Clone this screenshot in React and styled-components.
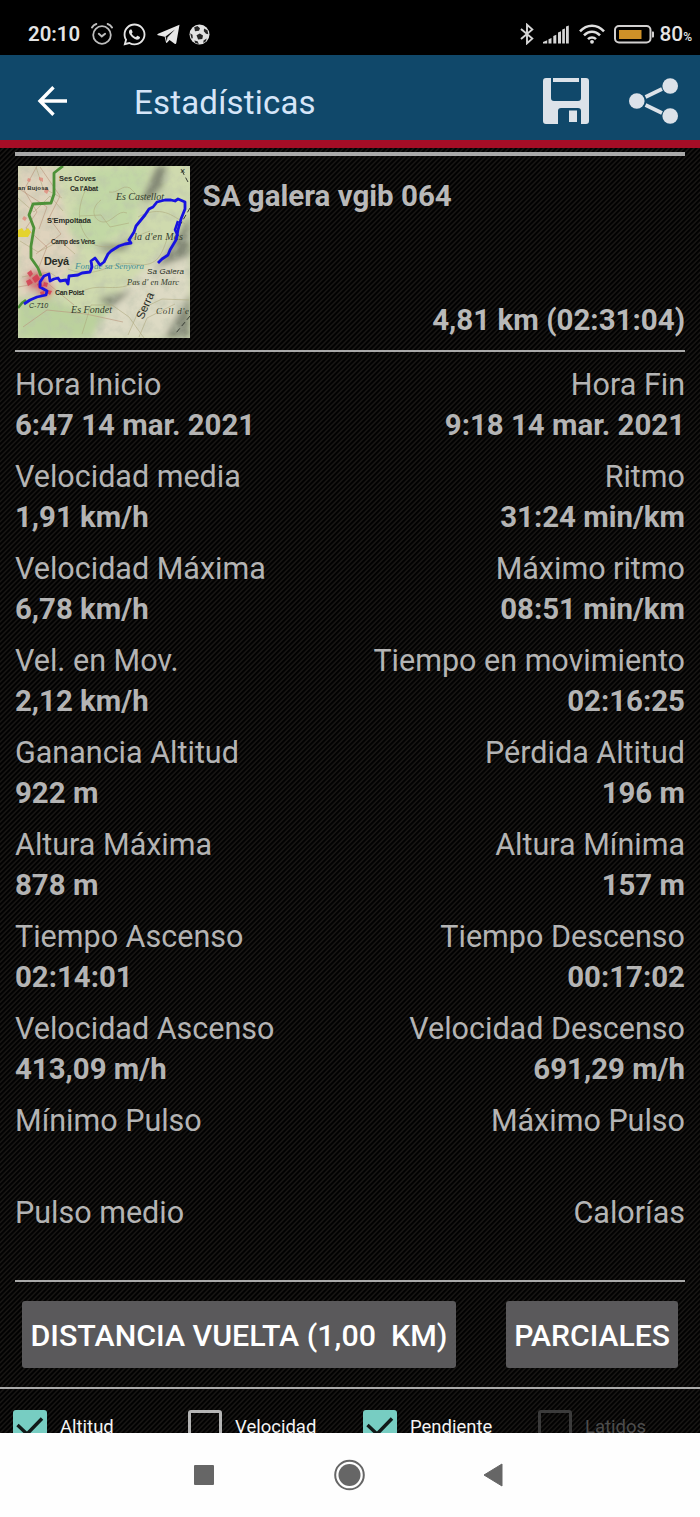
import React from 'react';
import styled, { createGlobalStyle, css } from 'styled-components';
import { FaWhatsapp } from 'react-icons/fa';

const Global = createGlobalStyle`
  * { box-sizing: border-box; }
  body { margin: 0; background: #000; font-family: Roboto, "Liberation Sans", sans-serif; }
  svg { display: block; flex: none; }
`;

const Screen = styled.div`
  width: 700px;
  height: 1517px;
  display: flex;
  flex-direction: column;
  overflow: hidden;
  background: #000;
`;

const StatusBar = styled.header`
  height: 55px;
  padding: 14px 8px 0 28px;
  display: flex;
  justify-content: space-between;
  color: #e4e4e4;
`;

const StatusGroup = styled.div`
  height: 40px;
  display: flex;
  align-items: center;
  gap: ${(p) => p.$gap}px;
`;

const Clock = styled.span`
  width: 53px;
  font-size: 20.4px;
  font-weight: 600;
  white-space: nowrap;
`;

const Percent = styled.span`
  font-size: 20.8px;
  font-weight: 500;
  margin-left: -4px;
  white-space: nowrap;
  small { font-size: 12px; }
`;

const AppBar = styled.nav`
  height: 93px;
  display: flex;
  align-items: center;
  padding: 0 22px 0 37px;
  background: #10486a;
  border-bottom: 8px solid #a50d26;
`;

const Title = styled.h1`
  flex: 1;
  margin: 11px 0 0 66px;
  font-size: 33px;
  line-height: 36px;
  font-weight: 400;
  letter-spacing: 0.2px;
  color: #d5e5f8;
`;

const Actions = styled.div`
  display: flex;
  align-items: center;
  gap: 40px;
  margin-top: 7px;
`;

const Content = styled.main`
  height: 1285px;
  overflow: hidden;
  background: #000 repeating-linear-gradient(135deg, #020202 0, #020202 1px, #191715 2.2px, #191715 2.6px, #020202 3.54px);
`;

const Section = styled.section`
  margin: 0 15px;
`;

const TrackCard = styled(Section)`
  margin-top: 4px;
  height: 200px;
  border-top: 4px solid #a9a9a9;
  border-bottom: 2px solid #a9a9a9;
  padding: 10px 0 0 3px;
  display: flex;
  gap: 12.5px;
`;

const TrackInfo = styled.div`
  flex: 1;
  height: 172px;
  display: flex;
  flex-direction: column;
  justify-content: space-between;
`;

const TrackText = styled.div`
  font-size: 29.5px;
  line-height: 34px;
  font-weight: 700;
  color: #b9b9b9;
  white-space: pre;
  align-self: ${(p) => (p.$end ? 'flex-end' : 'flex-start')};
  padding: ${(p) => (p.$end ? '0 0 1px' : '13px 0 0')};
`;

const Stats = styled(Section)`
  height: 930px;
  padding-top: 12px;
  border-bottom: 2px solid #a9a9a9;
`;

const StatRow = styled.div`
  height: 92px;
  display: flex;
  justify-content: space-between;
`;

const Stat = styled.div`
  color: #b4b4b4;
  white-space: pre;
  text-align: ${(p) => (p.$end ? 'right' : 'left')};
`;

const Label = styled.div`
  font-size: 30.5px;
  line-height: 41px;
`;

const Value = styled.div`
  font-size: 29.4px;
  line-height: 40px;
  font-weight: 700;
`;

const ButtonRow = styled.div`
  height: 107px;
  padding: 19px 22px 0;
  display: flex;
  justify-content: space-between;
  border-bottom: 2px solid #a9a9a9;
`;

const Button = styled.button`
  width: ${(p) => p.$width}px;
  height: 67px;
  padding: 0;
  border: 0;
  border-radius: 3px;
  background: #5a595b;
  color: #fff;
  font: 500 ${(p) => p.$size}px/69px Roboto, sans-serif;
  white-space: pre;
`;

const CheckRow = styled.div`
  display: grid;
  grid-template-columns: repeat(4, 175px);
  padding-top: 21px;
`;

const Check = styled.label`
  display: flex;
  gap: 13px;
  padding-left: 13px;
  font-size: 18.5px;
  line-height: 34px;
  color: ${(p) => (p.$off ? '#4d4d4d' : '#f4f4f4')};
`;

const Box = styled.span`
  width: 34px;
  height: 34px;
  border-radius: 3px;
  ${(p) => (p.$on
    ? css`background: #77cdc2;`
    : css`border: 3px solid ${p.$off ? '#3b3b3b' : '#b4b4b4'};`)}
`;

const NavBar = styled.footer`
  height: 84px;
  flex: none;
  display: flex;
  align-items: center;
  justify-content: center;
  gap: 119px;
  padding-right: 2px;
  background: #fefefe;
`;

const stats = [
  ['Hora Inicio', '6:47 14 mar. 2021', 'Hora Fin', '9:18 14 mar. 2021'],
  ['Velocidad media', '1,91 km/h', 'Ritmo', '31:24 min/km'],
  ['Velocidad Máxima', '6,78 km/h', 'Máximo ritmo', '08:51 min/km'],
  ['Vel. en Mov.', '2,12 km/h', 'Tiempo en movimiento', '02:16:25'],
  ['Ganancia Altitud', '922 m', 'Pérdida Altitud', '196 m'],
  ['Altura Máxima', '878 m', 'Altura Mínima', '157 m'],
  ['Tiempo Ascenso', '02:14:01', 'Tiempo Descenso', '00:17:02'],
  ['Velocidad Ascenso', '413,09 m/h', 'Velocidad Descenso', '691,29 m/h'],
  ['Mínimo Pulso', '', 'Máximo Pulso', ''],
  ['Pulso medio', '', 'Calorías', ''],
];

const checks = [
  { name: 'Altitud', on: true },
  { name: 'Velocidad' },
  { name: 'Pendiente', on: true },
  { name: 'Latidos', off: true },
];

const AlarmIcon = () => (
  <svg width="22" height="22" viewBox="0 0 22 22" fill="none" stroke="#bdbdbd" strokeWidth="1.8" strokeLinecap="round">
    <circle cx="11" cy="12" r="8.8" />
    <path d="M1 4.5C2 2.8 3.500 1.500 5.300 1M21 4.500C20 2.800 18.500 1.500 16.700 1" strokeWidth="2" />
    <path d="M7.800 10.800l3 2.600 3.300-2.600" strokeWidth="2" />
  </svg>
);

const TelegramIcon = () => (
  <svg width="23" height="21" viewBox="0 0 23 21" fill="#e8e8e8">
    <path d="M22.500.8 19.300 19c-.2 1-.9 1.200-1.700.7l-5-3.800-2.600 2.800c-.6.5-1 .1-1.100-.6l-1.200-5.300L1 11.200c-1-.4-1-1 .1-1.500z" />
    <path d="M8.500 12.400 18 5.400l-7.600 8-.6 4z" fill="#111" />
  </svg>
);

const BallIcon = () => (
  <svg width="21" height="21" viewBox="0 0 21 21">
    <circle cx="10.500" cy="10.500" r="10" fill="#e2e2e2" />
    <path d="M5.200 3.200 8.500 2l2.500 2.200-1 2.500-4 .5zM15 4.500l3.500 1.700.8 4-2.300-.4-2.200-2.600zM7.500 11.200l3.300-1.800 3.200 2-.7 3.600-4.200.5zM1.200 9.200l2.300 1.500.3 3.500-1.300.4zM5.300 16.500l3.300.8 1.200 2.600-3.500-.9zM14.500 16.600l3.200-2-.8 2.600-2.600 1.800z" fill="#262626" />
  </svg>
);

const BluetoothIcon = () => (
  <svg width="14" height="22" viewBox="0 0 14 22" fill="none" stroke="#d5d5d5" strokeWidth="1.900">
    <path d="M1 6 12.300 15.600 7 20.300V1.700l5.300 4.700L1 16" />
  </svg>
);

const SignalIcon = () => (
  <svg width="26" height="19" viewBox="0 0 26 19" fill="#d5d5d5">
    <path d="M0 18.500V17l4.200-1.700v3.200zM5.500 14.200l3-1.200v5.500h-3zM10.300 11l3-1.200v8.700h-3zM15 7.500l3-1.200v12.200h-3zM19.200 4.500l2.700-1v15h-2.700zM23 1.500l2.800-1v18H23z" />
  </svg>
);

const WifiIcon = () => (
  <svg width="26" height="20" viewBox="0 0 26 20" fill="none" stroke="#dedede" strokeWidth="2.500">
    <path d="M1 7.400C7.800-.2 18.200-.2 25 7.400M5 11.400c4.700-5 11.300-5 16 0M9 15.200c2.300-2.400 5.700-2.400 8 0" />
    <circle cx="13" cy="17.800" r="1.900" fill="#dedede" stroke="none" />
  </svg>
);

const BatteryIcon = () => (
  <svg width="40" height="19" viewBox="0 0 40 19">
    <rect x="1" y="1" width="35.500" height="16.500" rx="4" fill="#000" stroke="#d2d0d0" strokeWidth="2" />
    <rect x="5" y="5" width="22.500" height="9" fill="#ce9128" />
    <path d="M38 6.500h1.200q.8 0 .8 1v4q0 1-.8 1H38z" fill="#d2d0d0" />
  </svg>
);

const BackArrow = styled.svg`
  margin-top: 7px;
`;

const BackIcon = () => (
  <BackArrow width="31" height="30" viewBox="0 0 31 30" fill="none" stroke="#fff" strokeWidth="3.400">
    <path d="M16.500 1.300 3 15l13.500 13.700M3.500 15H30" />
  </BackArrow>
);

const SaveIcon = () => (
  <svg width="46" height="46" viewBox="0 0 46 46" fill="#dce2e9">
    <path d="M3 0h5v20q0 3 3 3h24q3 0 3-3V0h5q3 0 3 3v40q0 3-3 3h-5V33q0-3-3-3H18q-3 0-3 3v13H3q-3 0-3-3V3q0-3 3-3z" />
    <path d="M10 0h26v4H10zM26 32.500h8V44h-8z" />
  </svg>
);

const ShareIcon = () => (
  <svg width="49" height="46" viewBox="0 0 49 46" fill="#dce2e9">
    <path d="M16.500 19 33 11M16.500 27l16.500 8" stroke="#dce2e9" strokeWidth="3.800" />
    <circle cx="7.800" cy="23" r="7.800" />
    <circle cx="41.200" cy="8" r="7.800" />
    <circle cx="41.200" cy="38" r="7.800" />
  </svg>
);

const MapThumb = () => (
  <svg width="172" height="172" viewBox="0 0 172 172">
    <defs>
      <filter id="terrain" x="0" y="0" width="100%" height="100%">
        <feTurbulence type="fractalNoise" baseFrequency="0.09" numOctaves="4" seed="8" />
        <feColorMatrix values="0 0 0 0 .49  0 0 0 0 .53  0 0 0 0 .41  1.800 0 0 0 -.72" />
      </filter>
      <filter id="soft"><feGaussianBlur stdDeviation="3" /></filter>
    </defs>
    <rect width="172" height="172" fill="#cfdaae" />
    <g filter="url(#soft)">
      <path d="M0 0h38l8 45 15 44-22 31-39 16z" fill="#dfd3bd" />
      <path d="M72 3 132 0l-18 60-43 23-22-19z" fill="#c2d8a5" />
      <path d="M98 129l74-68v111H74z" fill="#dddac4" />
      <path d="M0 132l29 0 38 15 30-12-24 37H0z" fill="#bbd19d" />
      <path d="M139 0h10l-5 21-14 14-7-1zM172 49l-18 31-17 22 35-12zM172 127l-26 45h26zM79 78l23 1 15-9-10 14-20 2zM80 133l35-9-22 18z" fill="#7b8170" opacity=".9" />
      <path d="M6 112l10-8 13 3-3 13-13 5zM18 120l11-5 7 8-7 10-10-4z" fill="#d55361" opacity=".8" />
    </g>
    <rect width="172" height="172" filter="url(#terrain)" opacity=".6" />
    <g fill="none" stroke="#aaa578" strokeWidth=".7" opacity=".75">
      <path d="M83 34c-12 9-7 21 2 22s15-13 24-9M91 26c9 2 13-8 21-4l13 13M67 25c-9 20-8 41 10 54 21 7 34-7 55-14M62 50l21-1 9 12 19-4M50 103c29 12 42-9 65-5s28-7 34-25M65 125c18-9 33 3 55-10M120 51c22-12 35-2 47 7M64 168l9-29 21 0 17 12 15 21M110 169l11-25 23-11 27 1M121 171l8-19 28-14" />
      <path d="M0 32l16 14 16-16 13 15M2 75l18 11 22-11 15 13M18 1l7 21 19 10M4 111l27-5 20 13" />
    </g>
    <path d="M19 0 6 24l13 22-11 16 21 19-8 20M0 22l29 19-8 22M22 1l20 29-11 22 12 16-25 20M0 121l28-5 28 23M5 161l24-17 39 4 37 8" fill="none" stroke="#b9947c" strokeWidth="1" opacity=".6" />
    <path d="M9 107l4-3 2 4-3 3zM14 112l5-4 3 5-5 4zM8 115l4-2 3 4-5 3zM19 118l4-2 2 5-4 2zM26 116l4 1-1 4-4-1zM22 126l4-1 1 4-4 1zM30 124l4 1-2 4-3-2z" fill="#d2384c" opacity=".8" />
    <path d="M21 11l4 1v4l-4-2zM27 22l4 2-2 4-3-2zM10 12l3 1-1 3-3-1zM6 50l3 2-2 3-3-2z" fill="#de7f72" opacity=".7" />
    <path d="M0 64l4-2 2 3 4-3 3 4-3 5H0z" fill="#e4d32d" />
    <path d="M45 0 36 7v21l-3 9-18 1-4 11 5 13-3 18v12l7 10 3 8" fill="none" stroke="#4d9138" strokeWidth="2.800" strokeLinejoin="round" />
    <path d="M0 142l4-5 4-3" fill="none" stroke="#4d9138" strokeWidth="2.500" />
    <path d="M170 16l-7-13M172 42l-14 24M172 150l-14 17" fill="none" stroke="#363b33" strokeWidth="1" strokeDasharray="5 3" />
    <g fontFamily="Liberation Sans" fontWeight="700" fill="#292c25" fontSize="7">
      <text x="41" y="15" textLength="37" fontSize="7.500">Ses Coves</text>
      <text x="52" y="25" textLength="28">Ca l'Abat</text>
      <text x="0" y="24" textLength="30" fontSize="6">an Bujosa</text>
      <text x="29" y="57" textLength="44" fontSize="7.500">S'Empoltada</text>
      <text x="33" y="78" textLength="44" fontSize="6.500">Camp des Vens</text>
      <text x="26" y="99" textLength="25" fontSize="11">Deyá</text>
      <text x="37" y="129" textLength="29">Can Poist</text>
      <text x="129" y="108" textLength="37" fontSize="8" fontStyle="italic" fontWeight="400">Sa Galera</text>
      <text transform="translate(125 154) rotate(-66)" textLength="28" fontSize="11.500" fontWeight="400">Serra</text>
      <text x="11" y="142" fontSize="7" fontWeight="400" fontStyle="italic">C-710</text>
      <text x="162" y="8" fontSize="9" fontWeight="400">×</text>
    </g>
    <g fontFamily="Liberation Serif" fontStyle="italic" fill="#343d2d" fontSize="10">
      <text x="98" y="34" textLength="48">Es Castellot</text>
      <text x="116" y="74" textLength="49" fontSize="10">la d'en Mas</text>
      <text x="57" y="103" textLength="69" fill="#438f9a" fontSize="9">Font de sa Senyora</text>
      <text x="109" y="119" textLength="52" fontSize="8.500">Pas d' en Marc</text>
      <text x="53" y="147" textLength="41">Es Fondet</text>
      <text x="138" y="148" textLength="33" fontSize="9">Coll d'e</text>
    </g>
    <path d="M6 138 12 134 19 131 28 129 29 125 22 121 22 116 26 110 31 108 32 115 36 113 40 112 42 115 48 114 50 118 51 110 60 109 64 107 72 106 74 101 73 95 77 92 82 99 86 96 90 88 93 85 101 80 107 78 113 77 111 74 116 66 118 60 127 49 131 43 135 41 139 36 147 34 153 34 157 35 160 33 167 36 167 43 163 53 160 64 158 74 152 84 150 89 144 93 140 97" fill="none" stroke="#1713df" strokeWidth="2.800" strokeLinejoin="round" />
    <path d="M160 55l-3 9 3 6" fill="none" stroke="#1713df" strokeWidth="2.500" />
  </svg>
);

const CheckMark = () => (
  <svg width="34" height="34" viewBox="0 0 34 34" fill="none" stroke="#111918" strokeWidth="3.400">
    <path d="M4.500 15 14 24 29 8.500" />
  </svg>
);

export default function App() {
  return (
    <Screen>
      <Global />
      <StatusBar>
        <StatusGroup $gap={9.5}>
          <Clock>20:10</Clock>
          <AlarmIcon />
          <FaWhatsapp size={25} />
          <TelegramIcon />
          <BallIcon />
        </StatusGroup>
        <StatusGroup $gap={9.5}>
          <BluetoothIcon />
          <SignalIcon />
          <WifiIcon />
          <BatteryIcon />
          <Percent>80<small>%</small></Percent>
        </StatusGroup>
      </StatusBar>
      <AppBar>
        <BackIcon />
        <Title>Estadísticas</Title>
        <Actions>
          <SaveIcon />
          <ShareIcon />
        </Actions>
      </AppBar>
      <Content>
        <TrackCard>
          <MapThumb />
          <TrackInfo>
            <TrackText>SA galera vgib 064</TrackText>
            <TrackText $end>4,81 km (02:31:04)</TrackText>
          </TrackInfo>
        </TrackCard>
        <Stats>
          {stats.map(([left, leftValue, right, rightValue]) => (
            <StatRow key={left}>
              <Stat>
                <Label>{left}</Label>
                <Value>{leftValue}</Value>
              </Stat>
              <Stat $end>
                <Label>{right}</Label>
                <Value>{rightValue}</Value>
              </Stat>
            </StatRow>
          ))}
        </Stats>
        <ButtonRow>
          <Button $width={434} $size={30.4}>{'DISTANCIA VUELTA (1,00  KM)'}</Button>
          <Button $width={172} $size={30.1}>PARCIALES</Button>
        </ButtonRow>
        <CheckRow>
          {checks.map((c) => (
            <Check key={c.name} $off={c.off}>
              <Box $on={c.on} $off={c.off}>{c.on && <CheckMark />}</Box>
              {c.name}
            </Check>
          ))}
        </CheckRow>
      </Content>
      <NavBar>
        <svg width="20" height="20"><rect width="20" height="20" rx="1" fill="#666" /></svg>
        <svg width="32" height="32" viewBox="0 0 32 32">
          <circle cx="16.500" cy="16" r="14.300" fill="none" stroke="#666" strokeWidth="2" />
          <circle cx="16.500" cy="16" r="11" fill="#666" />
        </svg>
        <svg width="20" height="24" viewBox="1 0 20 24"><path d="M19 1v22L1 12z" fill="#666" stroke="#666" strokeLinejoin="round" /></svg>
      </NavBar>
    </Screen>
  );
}
